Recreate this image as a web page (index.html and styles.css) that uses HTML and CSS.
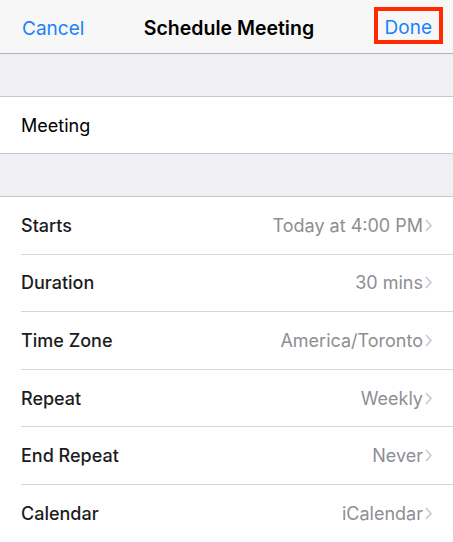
FILE: index.html
```html
<!DOCTYPE html>
<html lang="en">
<head>
  <meta charset="UTF-8">
  <meta name="viewport" content="width=device-width, initial-scale=1.0">
  <title>Schedule Meeting</title>
  <link rel="stylesheet" href="styles.css">
</head>
<body>
  <header class="navbar">
    <button class="nav-btn">Cancel</button>
    <h1>Schedule Meeting</h1>
    <button class="nav-btn done">Done</button>
  </header>

  <div class="spacer"></div>
  <div class="field">Meeting</div>
  <div class="spacer"></div>

  <ul class="list">
    <li><span class="label">Starts</span><span class="value">Today at 4:00 PM<svg class="chevron" viewBox="0 0 7 13"><polyline points="1,1 6,6.5 1,12"/></svg></span></li>
    <li><span class="label">Duration</span><span class="value">30 mins<svg class="chevron" viewBox="0 0 7 13"><polyline points="1,1 6,6.5 1,12"/></svg></span></li>
    <li><span class="label">Time Zone</span><span class="value">America/Toronto<svg class="chevron" viewBox="0 0 7 13"><polyline points="1,1 6,6.5 1,12"/></svg></span></li>
    <li><span class="label">Repeat</span><span class="value">Weekly<svg class="chevron" viewBox="0 0 7 13"><polyline points="1,1 6,6.5 1,12"/></svg></span></li>
    <li><span class="label">End Repeat</span><span class="value">Never<svg class="chevron" viewBox="0 0 7 13"><polyline points="1,1 6,6.5 1,12"/></svg></span></li>
    <li><span class="label">Calendar</span><span class="value">iCalendar<svg class="chevron" viewBox="0 0 7 13"><polyline points="1,1 6,6.5 1,12"/></svg></span></li>
  </ul>
</body>
</html>
```

FILE: styles.css
```css
body {
  margin: 0;
  font-family: Inter, "Liberation Sans", sans-serif;
  background-color: #ffffff;
  color: #1c1c1e;
}
.navbar {
  display: flex;
  align-items: center;
  justify-content: space-between;
  height: 53px;
  padding: 0 10px 0 22px;
  background-color: #f7f7f7;
  border-bottom: 1px solid #b2b2b2;
}
.navbar h1 {
  margin: 0;
  padding-top: 3px;
  font-size: 19.5px;
  font-weight: 600;
  color: #000;
}
.nav-btn {
  border: none;
  background: none;
  padding: 3px 0 0;
  font-family: inherit;
  font-size: 19px;
  color: #1a82fb;
}
.nav-btn.done {
  padding: 5px 7px 1px;
  margin-bottom: 3px;
  border: 4px solid #ff2a00;
}
.spacer {
  height: 42px;
  background-color: #efeff4;
  border-bottom: 1px solid #c8c7cc;
}
.field {
  height: 56px;
  display: flex;
  align-items: center;
  padding: 0 21px;
  font-size: 18px;
  color: #000;
  border-bottom: 1px solid #c8c7cc;
}
.list {
  list-style: none;
  margin: 0;
  padding: 0 0 0 21px;
}
.list li {
  display: flex;
  align-items: center;
  justify-content: space-between;
  height: 56.6px;
  padding-right: 21px;
  border-bottom: 1px solid #d6d6da;
  font-size: 18px;
}
.label {
  font-weight: 500;
  color: #1c1c1e;
}
.value {
  display: flex;
  align-items: center;
  color: #8e8e93;
}
.chevron {
  width: 7px;
  height: 13px;
  margin-left: 2px;
}
.chevron polyline {
  fill: none;
  stroke: #c7c7cc;
  stroke-width: 1.5;
}
```
